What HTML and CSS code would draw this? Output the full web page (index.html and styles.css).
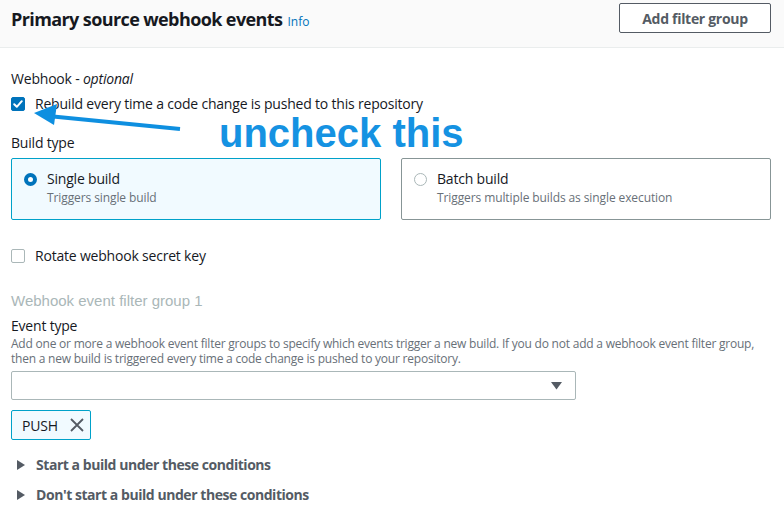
FILE: index.html
```html
<!DOCTYPE html>
<html>
<head>
<meta charset="utf-8">
<link rel="stylesheet" href="styles.css">
</head>
<body>
<div class="page">
  <div class="header">
    <h2 class="title">Primary source webhook events <a class="info">Info</a></h2>
    <button class="btn">Add filter group</button>
  </div>
  <div class="content">
    <div class="label">Webhook - <i>optional</i></div>
    <label class="check-row first">
      <span class="checkbox checked">
        <svg width="14" height="14" viewBox="0 0 14 14"><path d="M3.2 7.2 L5.8 9.8 L10.8 4.2" fill="none" stroke="#fff" stroke-width="2" stroke-linecap="round" stroke-linejoin="round"/></svg>
      </span>
      <span>Rebuild every time a code change is pushed to this repository</span>
    </label>
    <div class="label build-type">Build type</div>
    <div class="cards">
      <div class="card selected">
        <span class="radio on"></span>
        <div>
          <div class="card-title">Single build</div>
          <div class="card-desc">Triggers single build</div>
        </div>
      </div>
      <div class="card">
        <span class="radio"></span>
        <div>
          <div class="card-title">Batch build</div>
          <div class="card-desc">Triggers multiple builds as single execution</div>
        </div>
      </div>
    </div>
    <label class="check-row rotate">
      <span class="checkbox"></span>
      <span>Rotate webhook secret key</span>
    </label>
    <div class="group-title">Webhook event filter group 1</div>
    <div class="label event-type">Event type</div>
    <div class="desc">Add one or more a webhook event filter groups to specify which events trigger a new build. If you do not add a webhook event filter group, then a new build is triggered every time a code change is pushed to your repository.</div>
    <div class="select">
      <svg width="11" height="8" viewBox="0 0 11 8"><path d="M0 0 H11 L5.5 7.5 Z" fill="#545b64"/></svg>
    </div>
    <div class="token">
      <span>PUSH</span>
      <svg width="14" height="14" viewBox="0 0 14 14"><path d="M1 1 L13 13 M13 1 L1 13" stroke="#545b64" stroke-width="1.8" fill="none"/></svg>
    </div>
    <div class="expander first-exp">
      <svg width="8" height="10" viewBox="0 0 8 10"><path d="M0 0 L8 5 L0 10 Z" fill="#545b64"/></svg>
      <span>Start a build under these conditions</span>
    </div>
    <div class="expander">
      <svg width="8" height="10" viewBox="0 0 8 10"><path d="M0 0 L8 5 L0 10 Z" fill="#545b64"/></svg>
      <span>Don't start a build under these conditions</span>
    </div>
  </div>

  <svg class="arrow" width="200" height="40" viewBox="0 0 200 40">
    <path d="M180 37 L48 24" stroke="#0e8fe0" stroke-width="4" fill="none"/>
    <path d="M34 21 L57 12 L54 33 Z" fill="#0e8fe0"/>
  </svg>
  <div class="annotation">uncheck this</div>
</div>
</body>
</html>
```
FILE: styles.css
```css
* { box-sizing: border-box; }
html, body { margin: 0; padding: 0; background: #fff; }
body {
  font-family: "Open Sans", "Noto Sans", Arial, sans-serif;
  color: #16191f;
  font-size: 14px;
  letter-spacing: -0.2px;
  width: 784px;
  height: 525px;
  overflow: hidden;
}
.page { position: relative; height: 525px; }
.header {
  height: 48px;
  background: #fafafa;
  border-bottom: 1px solid #eaeded;
  display: flex;
  justify-content: space-between;
  align-items: flex-start;
  padding: 3px 13px 0 11px;
}
.title {
  margin: 4px 0 0 0;
  font-size: 18px;
  font-weight: 700;
  line-height: 24px;
  letter-spacing: -0.6px;
}
.info {
  font-size: 12px;
  font-weight: 400;
  color: #0073bb;
  margin-left: 1px;
  letter-spacing: 0;
}
.btn {
  width: 152px;
  height: 30px;
  border: 1px solid #545b64;
  border-radius: 2px;
  background: #fff;
  color: #545b64;
  font-family: inherit;
  font-size: 14px;
  font-weight: 700;
  letter-spacing: -0.3px;
  padding: 0;
}
.content { padding: 0 13px 0 11px; }
.label { line-height: 20px; }
.content > .label:first-child { margin-top: 21px; }
.check-row {
  display: flex;
  align-items: center;
  gap: 10px;
  line-height: 20px;
}
.check-row.first { margin-top: 5px; }
.checkbox {
  width: 14px;
  height: 14px;
  border: 1px solid #aab7b8;
  border-radius: 2px;
  display: inline-flex;
  flex: none;
}
.checkbox.checked { background: #0073bb; border-color: #0073bb; }
.checkbox.checked svg { margin: -1px; }
.build-type { margin-top: 19px; }
.cards {
  display: grid;
  grid-template-columns: 370px 370px;
  gap: 20px;
  margin-top: 5px;
}
.card {
  height: 62px;
  border: 1px solid #879596;
  border-radius: 2px;
  display: flex;
  align-items: flex-start;
  gap: 10px;
  padding: 10px 12px;
}
.card.selected { border-color: #00a1c9; background: #f1faff; }
.radio {
  width: 13px;
  height: 13px;
  border-radius: 50%;
  border: 1px solid #aab7b8;
  background: #fff;
  margin-top: 4px;
  flex: none;
}
.radio.on { border: 4px solid #0073bb; }
.card-title { line-height: 20px; }
.card-desc { font-size: 12px; color: #687078; line-height: 16px; margin-top: 1px; letter-spacing: -0.1px; }
.rotate { margin-top: 26px; }
.group-title {
  margin-top: 25px;
  font-family: "Liberation Sans", Arial, sans-serif;
  color: #aab7b8;
  font-size: 15px;
  line-height: 20px;
  letter-spacing: 0;
}
.event-type { margin-top: 5px; }
.desc {
  font-size: 12px;
  color: #687078;
  line-height: 15px;
  margin-top: 0;
  letter-spacing: -0.22px;
}
.select {
  margin-top: 5px;
  width: 565px;
  height: 29px;
  border: 1px solid #aab7b8;
  border-radius: 2px;
  display: flex;
  align-items: center;
  justify-content: flex-end;
  padding-right: 13px;
}
.token {
  margin-top: 10px;
  width: 80px;
  height: 30px;
  border: 1px solid #00a1c9;
  border-radius: 2px;
  background: #f1faff;
  display: flex;
  align-items: center;
  gap: 12px;
  padding-left: 10px;
}
.expander {
  display: flex;
  align-items: center;
  gap: 11px;
  padding-left: 6px;
  font-weight: 700;
  color: #545b64;
  line-height: 20px;
  margin-top: 10px;
  letter-spacing: -0.45px;
}
.expander.first-exp { margin-top: 15px; }
.arrow { position: absolute; left: 0; top: 92px; }
.annotation {
  position: absolute;
  left: 219px;
  top: 109px;
  font-family: "Liberation Sans", Arial, sans-serif;
  font-weight: 700;
  font-size: 40px;
  line-height: 48px;
  color: #1592e2;
  letter-spacing: 0;
}
```
